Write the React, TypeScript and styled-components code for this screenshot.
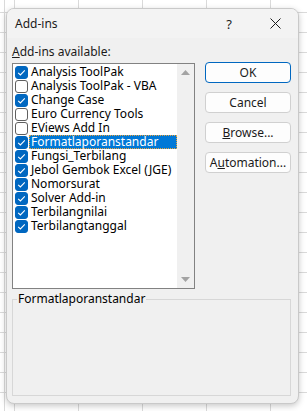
import React from 'react';
import styled, { createGlobalStyle } from 'styled-components';

const items = [
  { name: 'Analysis ToolPak', checked: true },
  { name: 'Analysis ToolPak - VBA', checked: false },
  { name: 'Change Case', checked: true },
  { name: 'Euro Currency Tools', checked: false },
  { name: 'EViews Add In', checked: false },
  { name: 'Formatlaporanstandar', checked: true, selected: true },
  { name: 'Fungsi_Terbilang', checked: true },
  { name: 'Jebol Gembok Excel (JGE)', checked: true },
  { name: 'Nomorsurat', checked: true },
  { name: 'Solver Add-in', checked: true },
  { name: 'Terbilangnilai', checked: true },
  { name: 'Terbilangtanggal', checked: true },
];

const App: React.FC = () => {
  return (
    <>
      <GlobalStyle />
      <Sheet>
        <Dialog>
          <TitleBar>
            <Title>Add-ins</Title>
            <CaptionButton>?</CaptionButton>
            <CaptionButton>
              <svg width="11" height="11" viewBox="0 0 11 11">
                <path d="M0.5 0.5 L10.5 10.5 M10.5 0.5 L0.5 10.5" stroke="#1b1b1b" strokeWidth="1" fill="none" />
              </svg>
            </CaptionButton>
          </TitleBar>

          <Body>
            <Label>
              <u>A</u>dd-ins available:
            </Label>
            <Main>
              <ListBox>
                <Items>
                  {items.map((item) => (
                    <Item key={item.name}>
                      <Check $checked={item.checked}>
                        {item.checked && (
                          <svg width="13" height="13" viewBox="0 0 13 13">
                            <path d="M3.2 6.8 L5.4 9 L9.8 4.4" stroke="#fff" strokeWidth="1.1" fill="none" />
                          </svg>
                        )}
                      </Check>
                      <ItemText $selected={item.selected}>{item.name}</ItemText>
                    </Item>
                  ))}
                </Items>
                <ScrollBar>
                  <Arrow>
                    <svg width="9" height="5" viewBox="0 0 9 5">
                      <path d="M0 5 L4.5 0 L9 5 Z" fill="#a3a3a3" />
                    </svg>
                  </Arrow>
                  <Arrow>
                    <svg width="9" height="5" viewBox="0 0 9 5">
                      <path d="M0 0 L4.5 5 L9 0 Z" fill="#a3a3a3" />
                    </svg>
                  </Arrow>
                </ScrollBar>
              </ListBox>

              <Buttons>
                <Button $default>OK</Button>
                <Button>Cancel</Button>
                <Button>
                  <u>B</u>rowse...
                </Button>
                <Button>
                  A<u>u</u>tomation...
                </Button>
              </Buttons>
            </Main>

            <Description>
              <Legend>Formatlaporanstandar</Legend>
            </Description>
          </Body>
        </Dialog>
      </Sheet>
    </>
  );
};

const GlobalStyle = createGlobalStyle`
  html, body {
    margin: 0;
    padding: 0;
    background: #ffffff;
  }
  body {
    font-family: "Noto Sans", "Open Sans", sans-serif;
    font-size: 12px;
    color: #1b1b1b;
  }
`;

const Sheet = styled.div`
  width: 307px;
  height: 411px;
  box-sizing: border-box;
  padding: 8px 0 0 6px;
  overflow: hidden;
  background-color: #ffffff;
  background-image:
    linear-gradient(to right, transparent 4px, #dadada 4px, #dadada 5px, transparent 5px),
    repeating-linear-gradient(to right, transparent 0, transparent 14px, #dadada 14px, #dadada 15px, transparent 15px, transparent 64px),
    repeating-linear-gradient(to bottom, transparent 0, transparent 12px, #dadada 12px, #dadada 13px, transparent 13px, transparent 20px);
`;

const Dialog = styled.div`
  width: 293px;
  height: 396px;
  box-sizing: border-box;
  display: flex;
  flex-direction: column;
  background: #f0f0f0;
  border: 1px solid #c9c9c9;
  border-radius: 8px;
  box-shadow: 0 2px 6px rgba(0, 0, 0, 0.22);
  overflow: hidden;
`;

const TitleBar = styled.div`
  height: 29px;
  display: flex;
  align-items: center;
  background: #f3f3f3;
  padding-left: 8px;
`;

const Title = styled.div`
  flex: 1;
  font-size: 12px;
  color: #1b1b1b;
`;

const CaptionButton = styled.div`
  width: 46px;
  height: 29px;
  display: flex;
  align-items: center;
  justify-content: center;
  font-size: 13px;
  color: #1b1b1b;
`;

const Body = styled.div`
  padding: 7px 7px 0 5px;
  display: flex;
  flex-direction: column;
`;

const Label = styled.div`
  height: 14px;
  line-height: 14px;
  margin-bottom: 4px;
`;

const Main = styled.div`
  display: grid;
  grid-template-columns: 183px 86px;
  column-gap: 10px;
  align-items: start;
`;

const ListBox = styled.div`
  height: 226px;
  box-sizing: border-box;
  display: flex;
  background: #ffffff;
  border: 1px solid #828282;
`;

const Items = styled.div`
  flex: 1;
  padding-top: 1px;
  display: flex;
  flex-direction: column;
`;

const Item = styled.div`
  height: 14px;
  display: flex;
  align-items: center;
`;

const Check = styled.div<{ $checked?: boolean }>`
  width: 13px;
  height: 13px;
  box-sizing: border-box;
  margin-left: 2px;
  border-radius: 3px;
  display: flex;
  background: ${(p) => (p.$checked ? '#0067c0' : '#ffffff')};
  border: 1px solid ${(p) => (p.$checked ? '#0067c0' : '#5f5f5f')};

  svg {
    margin: -1px;
  }
`;

const ItemText = styled.div<{ $selected?: boolean }>`
  flex: 1;
  height: 14px;
  line-height: 14px;
  box-sizing: border-box;
  margin-left: 1px;
  padding-left: 2px;
  white-space: nowrap;
  color: ${(p) => (p.$selected ? '#ffffff' : '#000000')};
  background: ${(p) => (p.$selected ? '#0078d7' : 'transparent')};
  outline: ${(p) => (p.$selected ? '1px dotted #e8a33c' : 'none')};
  outline-offset: -1px;
`;

const ScrollBar = styled.div`
  width: 17px;
  display: flex;
  flex-direction: column;
  justify-content: space-between;
  background: #f0f0f0;
`;

const Arrow = styled.div`
  width: 17px;
  height: 17px;
  display: flex;
  align-items: center;
  justify-content: center;
`;

const Buttons = styled.div`
  margin-top: -1px;
  display: flex;
  flex-direction: column;
  gap: 9px;
`;

const Button = styled.div<{ $default?: boolean }>`
  height: 21px;
  box-sizing: border-box;
  display: flex;
  align-items: center;
  justify-content: center;
  background: #fdfdfd;
  border: 1px solid ${(p) => (p.$default ? '#0067c0' : '#d0d0d0')};
  border-radius: 4px;
  font-size: 12px;
  color: #1b1b1b;
`;

const Description = styled.fieldset`
  margin: 3px 0 0 0;
  padding: 0;
  height: 104px;
  box-sizing: border-box;
  border: 1px solid #d7d7d7;
`;

const Legend = styled.legend`
  margin-left: 4px;
  padding: 0 1px;
  font-size: 12px;
  line-height: 14px;
  color: #000000;
`;

export default App;
